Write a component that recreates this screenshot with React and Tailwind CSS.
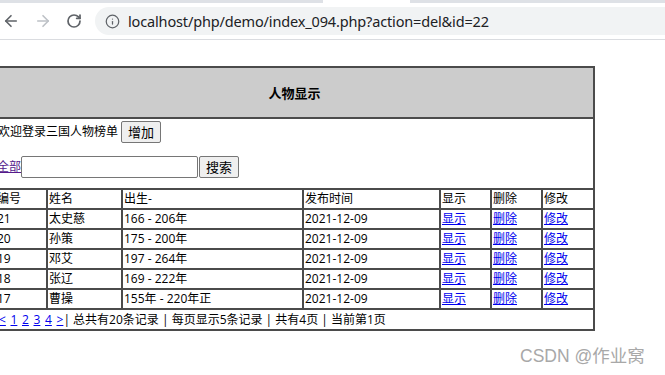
import React from 'react'
import { ArrowLeft, ArrowRight, RotateCw, Info } from 'lucide-react'

const rows = [
  { id: 21, name: '太史慈', born: '166 - 206年', date: '2021-12-09' },
  { id: 20, name: '孙策', born: '175 - 200年', date: '2021-12-09' },
  { id: 19, name: '邓艾', born: '197 - 264年', date: '2021-12-09' },
  { id: 18, name: '张辽', born: '169 - 222年', date: '2021-12-09' },
  { id: 17, name: '曹操', born: '155年 - 220年正', date: '2021-12-09' },
]

const cell = 'border-2 border-[#4b4b4b] px-[1px] py-0 h-[20px] text-left font-normal align-middle'
const link = 'text-[#0000ee] underline'

const Browser = () => (
  <div className="h-[40px] bg-white relative">
    <div className="flex h-[3px]">
      <div className="w-[323px] bg-[#dee1e6]" />
      <div className="w-[87px] bg-white" />
      <div className="flex-1 bg-[#dee1e6]" />
    </div>
    <div className="flex items-center h-[36px] pl-[2px]">
      <ArrowLeft className="w-[18px] h-[18px] text-[#5f6368]" strokeWidth={2.2} />
      <ArrowRight className="w-[18px] h-[18px] text-[#bdc1c6] ml-[14px]" strokeWidth={2.2} />
      <RotateCw className="w-[16px] h-[16px] text-[#5f6368] ml-[14px]" strokeWidth={2.6} />
      <div className="ml-[13px] flex-1 h-[28px] rounded-l-full bg-[#f1f3f4] flex items-center pl-[10px]">
        <Info className="w-[15px] h-[15px] text-[#5f6368]" strokeWidth={2} />
        <span className="ml-[8px] text-[14.5px] text-[#202124] font-['Noto_Sans',sans-serif] tracking-[-0.15px]">
          localhost/php/demo/index_094.php?action=del&amp;id=22
        </span>
      </div>
    </div>
    <div className="h-px bg-[#dadce0]" />
  </div>
)

export default function App() {
  return (
    <div className="w-[665px] h-[375px] bg-white overflow-hidden relative font-['Open_Sans','Noto_Sans_CJK_SC',sans-serif] text-[12px] leading-[16px] text-black">
      <Browser />
      <div className="ml-[-6px] mt-[26px] w-[601px] border-2 border-[#4b4b4b]">
        <div className="h-[51px] bg-[#cccccc] border-b-2 border-[#4b4b4b] flex items-center justify-center font-bold text-[13px]">
          人物显示
        </div>
        <div className="pt-px px-[2px] flex items-center h-[25px]">
          <span>欢迎登录三国人物榜单</span>
          <button className="ml-[3px] h-[22px] px-[6px] text-[13px] leading-[18px] bg-[#efefef] border border-[#767676] rounded-[2px]">
            增加
          </button>
        </div>
        <div className="mt-[11px] pl-px flex items-center h-[23px]">
          <a className="text-[#551a8b] underline">全部</a>
          <input className="w-[177px] h-[22px] border border-[#767676] rounded-[2px] bg-white" />
          <button className="ml-px h-[22px] px-[6px] text-[13px] leading-[18px] bg-[#efefef] border border-[#767676] rounded-[2px]">
            搜索
          </button>
        </div>
        <table className="mt-[10px] w-full table-fixed border-collapse">
          <colgroup>
            <col className="w-[51px]" />
            <col className="w-[75px]" />
            <col className="w-[181px]" />
            <col className="w-[137px]" />
            <col className="w-[51px]" />
            <col className="w-[51px]" />
            <col className="w-[51px]" />
          </colgroup>
          <thead>
            <tr>
              <th className={`${cell} border-l-0`}>编号</th>
              <th className={cell}>姓名</th>
              <th className={cell}>出生-</th>
              <th className={cell}>发布时间</th>
              <th className={cell}>显示</th>
              <th className={cell}>删除</th>
              <th className={`${cell} border-r-0`}>修改</th>
            </tr>
          </thead>
          <tbody>
            {rows.map((r) => (
              <tr key={r.id}>
                <td className={`${cell} border-l-0`}>{r.id}</td>
                <td className={cell}>{r.name}</td>
                <td className={cell}>{r.born}</td>
                <td className={cell}>{r.date}</td>
                <td className={cell}><a className={link}>显示</a></td>
                <td className={cell}><a className={link}>删除</a></td>
                <td className={`${cell} border-r-0`}><a className={link}>修改</a></td>
              </tr>
            ))}
            <tr>
              <td colSpan={7} className={`${cell} border-l-0 border-r-0 border-b-0 pl-[3px]`}>
                <span className="[word-spacing:1.5px]">
                  <a className={link}>&lt;</a>{' '}
                  <a className={link}>1</a>{' '}
                  <a className={link}>2</a>{' '}
                  <a className={link}>3</a>{' '}
                  <a className={link}>4</a>{' '}
                  <a className={link}>&gt;</a>
                </span>
                | 总共有20条记录 | 每页显示5条记录 | 共有4页 | 当前第1页
              </td>
            </tr>
          </tbody>
        </table>
      </div>
      <div className="absolute left-[520px] top-[344px] text-[17.5px] leading-[24px] text-[#a8a8a8] font-['Liberation_Sans','Noto_Sans_CJK_SC',sans-serif]">
        CSDN @作业窝
      </div>
    </div>
  )
}
